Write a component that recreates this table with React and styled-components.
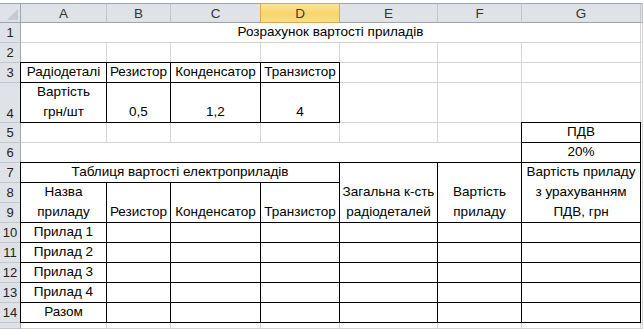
import React from 'react'
import styled, {createGlobalStyle, css} from 'styled-components'

const GRID = '#d4d4d4'
const HEAD_BG = '#dfe3e8'
const HEAD_LINE = '#c3c7cd'
const HEAD_EDGE = '#9ea4ab'

const Global = createGlobalStyle`
	html, body {
		margin: 0;
		background: #fff;
	}
	body {
		font-family: "Liberation Sans", Arial, sans-serif;
		font-size: 13.5px;
		color: #000;
		overflow: hidden;
	}
`;

const Sheet = styled.div`
	display: grid;
	grid-template-columns: 21px 86px 64px 90px 79px 98px 84px 119px 1fr;
	grid-template-rows: 20px repeat(3, 20px) 40px repeat(10, 20px) 1fr;
	width: 643px;
	height: 326px;
	padding-top: 3px;
`;

const Corner = styled.div`
	grid-column: 1;
	grid-row: 1;
	position: relative;
	background: ${HEAD_BG};
	border-top: 1px solid ${HEAD_EDGE};
	border-right: 1px solid ${HEAD_EDGE};
	border-bottom: 1px solid ${HEAD_EDGE};
	&::after {
		content: '';
		position: absolute;
		right: 2px;
		bottom: 2px;
		border-style: solid;
		border-width: 0 0 11px 11px;
		border-color: transparent transparent #c6cace transparent;
	}
`;

const ColHead = styled.div`
	grid-column: ${p => p.$c};
	grid-row: 1;
	display: flex;
	align-items: center;
	justify-content: center;
	font-size: 13.5px;
	color: #333;
	background: ${HEAD_BG};
	border-top: 1px solid ${HEAD_EDGE};
	border-right: 1px solid ${HEAD_LINE};
	border-bottom: 1px solid ${HEAD_EDGE};
	${p => p.$active && css`
		position: relative;
		z-index: 1;
		margin-left: -1px;
		background: linear-gradient(#fbe29a, #f9d56a 55%, #fbdd84);
		border: 1px solid #d9a94a;
		color: #3a3a3a;
	`}
`;

const RowHead = styled.div`
	grid-column: 1;
	grid-row: ${p => p.$r};
	display: flex;
	align-items: center;
	justify-content: center;
	font-size: 13px;
	color: #222;
	background: ${HEAD_BG};
	border-right: 1px solid ${HEAD_EDGE};
	border-bottom: 1px solid ${HEAD_LINE};
	${p => p.$tall && css`
		align-items: flex-end;
		padding-bottom: 1px;
	`}
`;

const Cell = styled.div`
	grid-column: ${p => p.$c} / span ${p => p.$cs || 1};
	grid-row: ${p => p.$r} / span ${p => p.$rs || 1};
	display: flex;
	align-items: flex-end;
	justify-content: center;
	text-align: center;
	white-space: pre-line;
	line-height: 20px;
	border-right: 1px solid ${GRID};
	border-bottom: 1px solid ${GRID};
	${p => p.$box && css`
		position: relative;
		z-index: 1;
		margin: -1px 0 0 -1px;
		border: 1px solid #000;
	`}
`;

const letters = ['A', 'B', 'C', 'D', 'E', 'F', 'G', '']

// [col, row, text, colSpan, rowSpan, boxed]
const cells = [
	[2, 2, 'Розрахунок вартості приладів', 7, 1],
	[9, 2, ''],
	...[2, 3, 4, 5, 6, 7, 8, 9].map(c => [c, 3, '']),
	[2, 4, 'Радіодеталі', 1, 1, true],
	[3, 4, 'Резистор', 1, 1, true],
	[4, 4, 'Конденсатор', 1, 1, true],
	[5, 4, 'Транзистор', 1, 1, true],
	...[6, 7, 8, 9].map(c => [c, 4, '']),
	[2, 5, 'Вартість\nгрн/шт', 1, 1, true],
	[3, 5, '0,5', 1, 1, true],
	[4, 5, '1,2', 1, 1, true],
	[5, 5, '4', 1, 1, true],
	...[6, 7, 8, 9].map(c => [c, 5, '']),
	...[2, 3, 4, 5, 6, 7].map(c => [c, 6, '']),
	[8, 6, 'ПДВ', 1, 1, true],
	[9, 6, ''],
	[2, 7, '', 6, 1],
	[8, 7, '20%', 1, 1, true],
	[9, 7, ''],
	[2, 8, 'Таблиця вартості електроприладів', 4, 1, true],
	[6, 8, 'Загальна к-сть\nрадіодеталей', 1, 3, true],
	[7, 8, 'Вартість\nприладу', 1, 3, true],
	[8, 8, 'Вартість приладу\nз урахуванням\nПДВ, грн', 1, 3, true],
	[9, 8, ''],
	[2, 9, 'Назва\nприладу', 1, 2, true],
	[3, 9, 'Резистор', 1, 2, true],
	[4, 9, 'Конденсатор', 1, 2, true],
	[5, 9, 'Транзистор', 1, 2, true],
	[9, 9, ''],
	[9, 10, ''],
	...['Прилад 1', 'Прилад 2', 'Прилад 3', 'Прилад 4', 'Разом'].flatMap((name, i) => [
		[2, 11 + i, name, 1, 1, true],
		...[3, 4, 5, 6, 7, 8].map(c => [c, 11 + i, '', 1, 1, true]),
		[9, 11 + i, ''],
	]),
	...[2, 3, 4, 5, 6, 7, 8, 9].map(c => [c, 16, '']),
]

const App = () => (
	<>
		<Global/>
		<Sheet>
			<Corner/>
			{letters.map((l, i) => (
				<ColHead key={i} $c={i + 2} $active={l === 'D'}>{l}</ColHead>
			))}
			{Array.from({length: 15}, (_, i) => (
				<RowHead key={i} $r={i + 2} $tall={i === 3}>{i < 14 ? i + 1 : ''}</RowHead>
			))}
			{cells.map(([c, r, text, cs, rs, box], i) => (
				<Cell key={i} $c={c} $r={r} $cs={cs} $rs={rs} $box={box}>{text}</Cell>
			))}
		</Sheet>
	</>
)

export default App
